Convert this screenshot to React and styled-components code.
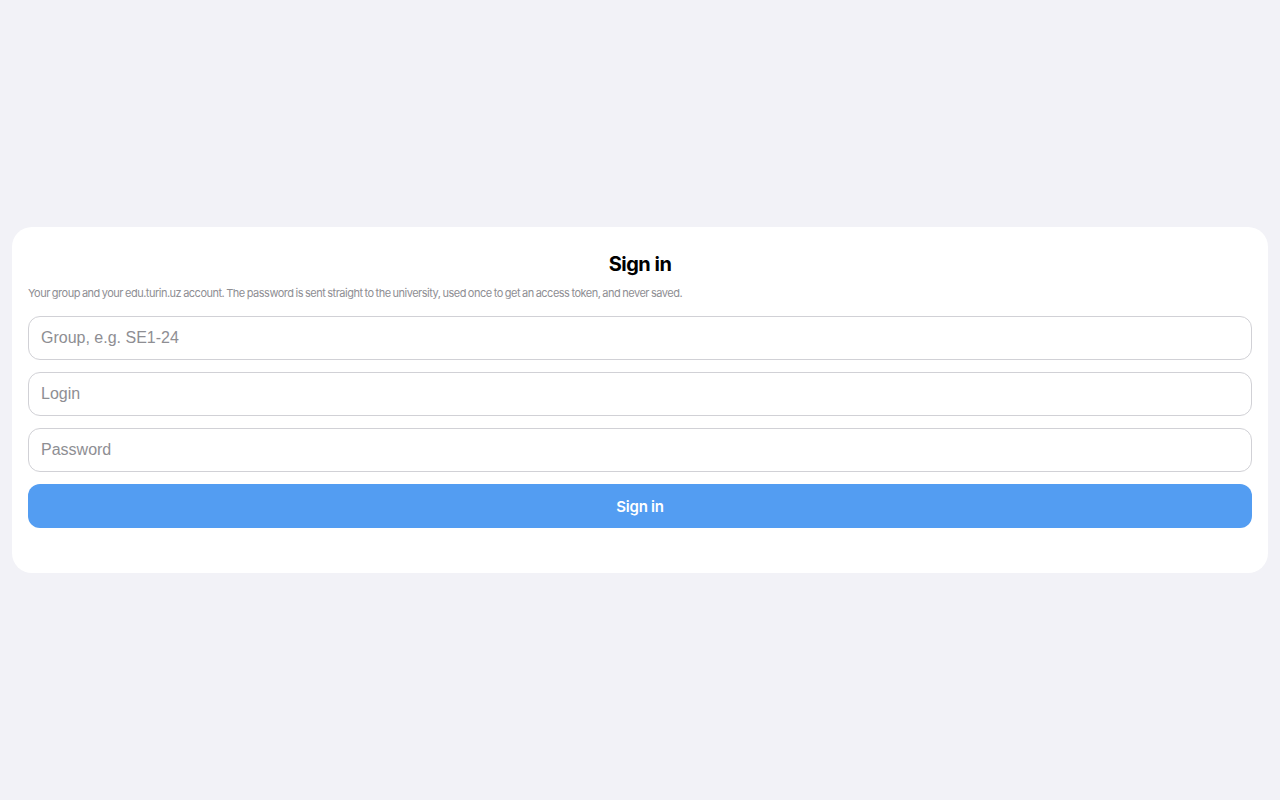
import React from "react";
import styled, { createGlobalStyle } from "styled-components";

const Global = createGlobalStyle`
  html, body { margin: 0; padding: 0; background: #f2f2f7; }
  body { font-family: Inter, "Liberation Sans", sans-serif; }
  * { box-sizing: border-box; }
`;

const Page = styled.div`
  min-height: 800px;
  display: flex;
  align-items: center;
  padding: 0 12px;
`;

const Card = styled.form`
  width: 100%;
  background: #ffffff;
  border-radius: 20px;
  padding: 24px 16px 45px;
  display: flex;
  flex-direction: column;
`;

const Title = styled.h1`
  margin: 0;
  font-size: 20px;
  line-height: 26px;
  font-weight: 700;
  text-align: center;
  color: #000;
  letter-spacing: -0.5px;
`;

const Subtitle = styled.p`
  margin: 10px 0 16px;
  font-size: 11px;
  line-height: 13px;
  color: #8e8e93;
  letter-spacing: -0.5px;
  word-spacing: -0.6px;
`;

const Fields = styled.div`
  display: flex;
  flex-direction: column;
  gap: 12px;
`;

const Input = styled.input`
  height: 44px;
  width: 100%;
  border: 1px solid #d1d1d6;
  border-radius: 12px;
  padding: 0 12px;
  font-family: "Liberation Sans", Arial, sans-serif;
  font-size: 16px;
  color: #000;
  background: #fff;
  outline: none;
  &::placeholder { color: #8e8e93; }
`;

const Button = styled.button`
  height: 44px;
  width: 100%;
  border: none;
  border-radius: 12px;
  background: #539df2;
  color: #fff;
  font-family: Inter, sans-serif;
  font-size: 15px;
  font-weight: 600;
  letter-spacing: -0.25px;
  cursor: pointer;
`;

export default function App() {
  return (
    <>
      <Global />
      <Page>
        <Card onSubmit={(e) => e.preventDefault()}>
          <Title>Sign in</Title>
          <Subtitle>
            Your group and your edu.turin.uz account. The password is sent straight to the university, used once to get an access token, and never saved.
          </Subtitle>
          <Fields>
            <Input placeholder="Group, e.g. SE1-24" />
            <Input placeholder="Login" />
            <Input type="password" placeholder="Password" />
            <Button type="submit">Sign in</Button>
          </Fields>
        </Card>
      </Page>
    </>
  );
}
